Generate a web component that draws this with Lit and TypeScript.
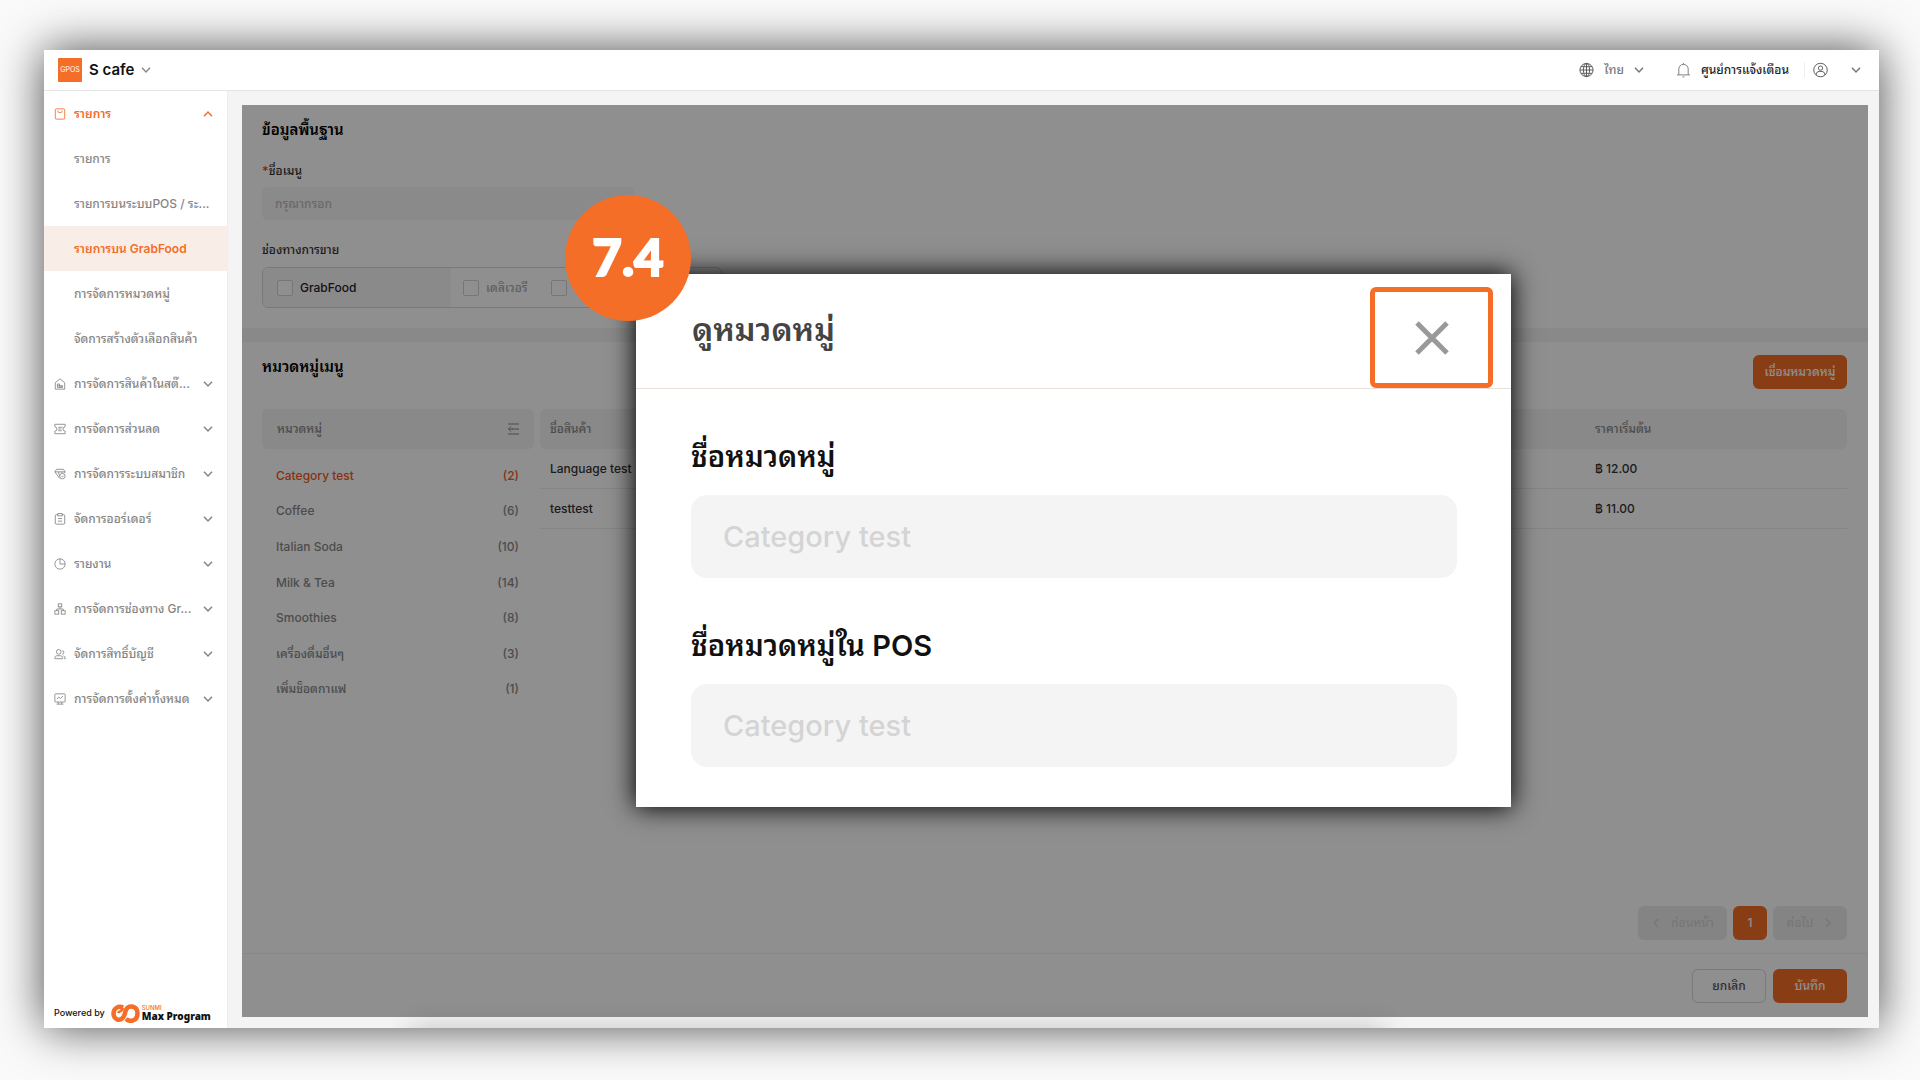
import { LitElement, html, css, svg, TemplateResult } from "lit";
import { customElement } from "lit/decorators.js";
import { classMap } from "lit/directives/class-map.js";

const chevron = (up = false) => html`<svg class="chev" viewBox="0 0 10 10" aria-hidden="true">
  <path d=${up ? "M1 7.2 5 3l4 4.200" : "M1 2.800 5 7l4-4.200"} />
</svg>`;

const icons: Record<string, TemplateResult> = {
  bag: svg`<rect x="1.500" y="1" width="11" height="12" rx="1.500"/><path d="M4.500 3v.5a2.500 2 0 0 0 5 0V3"/>`,
  store: svg`<path d="M1.500 5.500 7 1l5.500 4.500V13h-11z"/><path d="M4 11V7h2.500v4M4 9h6v2H4M8.500 11V9"/>`,
  coupon: svg`<path d="M1 1.500h12v3a2.500 2.500 0 0 0 0 5v3H1v-3a2.500 2.500 0 0 0 0-5z"/><path d="M5 5h5M5 7h3.500M5 9h4"/>`,
  member: svg`<path d="M3 1.500h8l2 3-1 1.500M3 1.500l-2 3L6.500 12M1 4.500h12M5 4.500 6.500 9M9 4.500l.5 1.500"/><circle cx="9.800" cy="9.500" r="3.200"/><path d="m9 9.500.8 1 1.400-1.500"/>`,
  clip: svg`<rect x="1.500" y="2" width="11" height="11" rx="1"/><rect x="4.500" y=".7" width="5" height="2.600" fill="#fff"/><path d="M4.500 6.500h5M4.500 9.500h5"/>`,
  pie: svg`<circle cx="7" cy="7" r="6"/><path d="M7 1v6h6"/>`,
  tree: svg`<rect x="5" y="1" width="4" height="3.500"/><rect x="1" y="9" width="4.500" height="4"/><rect x="8.500" y="9" width="4.500" height="4"/><path d="M7 4.500V7M3.200 9V7h7.600v2"/>`,
  users: svg`<circle cx="5.500" cy="4.500" r="2.700"/><path d="M1 12.500V11a2.500 2.500 0 0 1 2.500-2h4A2.500 2.500 0 0 1 10 11v1.500zM9.500 3.200a2 2 0 0 1 0 4M11 9.200a2.500 2.500 0 0 1 2 2.300v1h-1.200"/>`,
  board: svg`<rect x="1" y="1" width="12" height="9.500" rx="1"/><path d="m3.500 7 2-2.200 2 1.700 3-3M3 13h8M5 10.500V13M9 10.500V13"/>`,
};

interface NavItem { label: string; icon?: string; active?: boolean; open?: boolean; }

const NAV: NavItem[] = [
  { label: "รายการ", icon: "bag", open: true },
  { label: "รายการ" },
  { label: "รายการบนระบบPOS / ระ..." },
  { label: "รายการบน GrabFood", active: true },
  { label: "การจัดการหมวดหมู่" },
  { label: "จัดการสร้างตัวเลือกสินค้า" },
  { label: "การจัดการสินค้าในสต๊...", icon: "store" },
  { label: "การจัดการส่วนลด", icon: "coupon" },
  { label: "การจัดการระบบสมาชิก", icon: "member" },
  { label: "จัดการออร์เดอร์", icon: "clip" },
  { label: "รายงาน", icon: "pie" },
  { label: "การจัดการช่องทาง Gr...", icon: "tree" },
  { label: "จัดการสิทธิ์บัญชี", icon: "users" },
  { label: "การจัดการตั้งค่าทั้งหมด", icon: "board" },
];

const CATEGORIES: [string, number][] = [
  ["Category test", 2],
  ["Coffee", 6],
  ["Italian Soda", 10],
  ["Milk & Tea", 14],
  ["Smoothies", 8],
  ["เครื่องดื่มอื่นๆ", 3],
  ["เพิ่มช็อตกาแฟ", 1],
];

const PRODUCTS = [
  ["Language test", "฿ 12.00"],
  ["testtest", "฿ 11.00"],
];

@customElement("app-root")
export class AppRoot extends LitElement {
  static styles = css`
    :host {
      display: flex;
      box-sizing: border-box;
      min-height: 100vh;
      padding: 50px 41px 52px 44px;
      background: #fafafa;
      color: #333;
      font: 500 12px/16px Inter, "Noto Sans Thai Looped", Loma, Garuda, sans-serif;
    }
    *, *::before, *::after { box-sizing: border-box; }
    button, input { font: inherit; color: inherit; margin: 0; }
    button { padding: 0; border: 0; background: none; white-space: nowrap; }
    h1, h2, h3, ul, p { margin: 0; padding: 0; font: inherit; }
    ul { list-style: none; }
    svg { fill: none; stroke: currentColor; flex: none; }
    .chev { width: 10px; height: 10px; stroke-width: 1.5; }

    .frame {
      position: relative;
      flex: 1;
      display: flex;
      flex-direction: column;
      background: #f4f4f4;
      box-shadow: 0 0 44px rgba(0, 0, 0, 0.7);
    }
    .topbar {
      display: flex;
      align-items: center;
      justify-content: space-between;
      height: 41px;
      padding: 0 18px 0 14px;
      background: #fff;
      border-bottom: 1px solid #e4e4e4;
      color: #8a8a8a;
    }
    .store, .tools, .tool { display: flex; align-items: center; }
    .store { gap: 7px; }
    .logo {
      width: 24px;
      height: 24px;
      border-radius: 1px;
      background: #f46e27;
      color: #fff;
      font-size: 7px;
      font-weight: 400;
      line-height: 24px;
      text-align: center;
    }
    .store-name { color: #111; font-size: 15px; font-weight: 600; line-height: 24px; }
    .tool { gap: 10px; color: #777; }
    .tool + .tool { margin-left: 32px; }
    .tools .notice { color: #222; gap: 10px; }
    .tools .account { margin-left: 15px; padding-left: 8px; gap: 23px; border-left: 1px solid #eee; }
    .i14 { width: 15px; height: 16px; color: #555; }

    .body { flex: 1; display: flex; }
    .sidebar {
      display: flex;
      flex-direction: column;
      width: 184px;
      background: #fff;
      border-right: 1px solid #f3ede9;
    }
    .nav-item {
      display: flex;
      align-items: center;
      width: 100%;
      height: 45px;
      padding: 0 14px 0 10px;
      gap: 8px;
      color: #858585;
      text-align: left;
      text-decoration: none;
    }
    .nav-item.sub { padding: 0 0 0 30px; white-space: nowrap; }
    .nav-item.active { background: #f8ede7; color: #f46e27; font-weight: 600; }
    .nav-item.open { color: #f46e27; font-weight: 600; }
    .nav-item span { flex: 1; }
    .nav-icon { width: 12px; height: 12px; }
    .powered {
      display: flex;
      align-items: center;
      gap: 6px;
      margin-top: auto;
      padding: 0 10px 5px;
      color: #111;
      font-size: 9px;
      line-height: 20px;
      white-space: nowrap;
    }
    .brand { display: flex; align-items: center; gap: 2px; }
    .brand svg { width: 29px; height: 19px; color: #f46e27; }
    .brand-name { display: flex; flex-direction: column; font: 900 10px/11px "Noto Sans", sans-serif; }
    .brand-name small { color: #f46e27; font: 500 6px/6px Inter, sans-serif; }

    .content {
      position: relative;
      flex: 1;
      display: flex;
      flex-direction: column;
      margin: 14px 11px 11px 14px;
    }
    .shade { position: absolute; inset: 0; background: rgba(0, 0, 0, 0.44); }
    .card { background: #fff; padding: 16px 21px 20px 20px; }
    .card + .card { flex: 1; display: flex; flex-direction: column; margin-top: 14px; padding: 13px 21px 13px 20px; }
    .title { color: #000; font-size: 15px; font-weight: 600; line-height: 18px; }
    .label { display: block; margin-top: 24px; color: #333; font-weight: 500; }
    .label b { color: #f04a1a; }
    .text-field {
      display: block;
      width: 373px;
      height: 33px;
      margin-top: 8px;
      padding: 0 13px;
      border: 0;
      border-radius: 6px;
      background: #f6f6f6;
    }
    .text-field + .label { margin-top: 22px; }
    .text-field::placeholder { color: #bbb; opacity: 1; }
    .channels {
      display: flex;
      width: 460px;
      height: 41px;
      margin-top: 9px;
      border: 1px solid #d8d8d8;
      border-radius: 6px;
    }
    .channel-main { width: 188px; padding-left: 14px; background: #f6f6f6; border-radius: 5px 0 0 5px; color: #222; }
    .channel-main, .check { display: flex; align-items: center; gap: 7px; }
    .check { color: #aaa; margin-left: 12px; }
    .check + .check { margin-left: 23px; }
    .channels input {
      appearance: none;
      width: 16px;
      height: 16px;
      border: 1px solid #d4d4d4;
      border-radius: 2px;
      background: #fff;
    }
    .row { display: flex; justify-content: space-between; align-items: center; }
    .row .title { align-self: flex-start; padding-top: 3px; }
    .btn { height: 34px; border-radius: 6px; border: 1px solid transparent; font-weight: 500; }
    .primary { background: #f46e27; color: #fff; }
    .wide { width: 94px; }
    .mid { width: 74px; }
    .square { width: 34px; }
    .ghost { border-color: #d8d8d8; color: #555; }
    .lists { display: flex; gap: 6px; margin-top: 20px; }
    .cats { width: 272px; color: #888; }
    .cats-head {
      display: flex;
      align-items: center;
      justify-content: space-between;
      height: 40px;
      padding: 0 15px;
      border-radius: 6px;
      background: #f4f4f4;
    }
    .cats-head svg { width: 12px; height: 12px; }
    .cats ul { display: flex; flex-direction: column; height: 249px; margin-top: 9px; }
    .cats li { flex: 1; display: flex; }
    .cat { flex: 1; display: flex; align-items: center; justify-content: space-between; padding: 0 15px 0 14px; }
    .cat.on { color: #f4571c; }
    table { flex: 1; border-spacing: 0; table-layout: fixed; color: #333; align-self: flex-start; }
    th, td { height: 40px; padding: 0 10px; text-align: left; font-weight: 500; }
    th { background: #f4f4f4; color: #888; }
    th:first-child { border-radius: 6px 0 0 6px; }
    th:last-child { width: 262px; border-radius: 0 6px 6px 0; }
    td { border-bottom: 1px solid #eee; }
    .pager { display: flex; justify-content: flex-end; gap: 6px; margin-top: auto; }
    .pager .muted { display: flex; align-items: center; justify-content: center; gap: 10px; background: #ececec; color: #d4d4d4; }
    .prev { width: 89px; }
    .footer {
      display: flex;
      justify-content: flex-end;
      gap: 7px;
      padding: 15px 21px 14px;
      border-top: 1px solid #f2f2f2;
      background: #fff;
    }
    .under-shadow { position: absolute; left: 0; right: 0; bottom: 0; height: 40px; overflow: hidden; }
    .under-shadow::after {
      content: "";
      position: absolute;
      top: 40px;
      left: 20%;
      right: 27%;
      height: 40px;
      box-shadow: 0 0 28px rgba(0, 0, 0, 0.2);
    }

    .modal {
      position: absolute;
      left: 592px;
      top: 224px;
      width: 875px;
      background: #fff;
      box-shadow: 0 0 24px 1px #000;
      color: #111;
      font-size: 29px;
      line-height: 40px;
    }
    .modal-head {
      display: flex;
      justify-content: space-between;
      align-items: flex-start;
      height: 115px;
      padding: 13px 18px 0 56px;
      border-bottom: 1px solid #eadfda;
    }
    .modal-head h2 { padding-top: 23px; color: #444; font-size: 32px; font-weight: 600; }
    .close { width: 123px; height: 101px; border: 5px solid #f46e27; border-radius: 6px; color: #999; }
    .close svg { width: 34px; height: 34px; stroke-width: 5; display: block; margin: auto; }
    .modal-body { display: flex; flex-direction: column; gap: 48px; padding: 48px 54px 40px 55px; }
    .field { display: flex; flex-direction: column; gap: 18px; }
    .field label { font-weight: 600; }
    .field input {
      width: 100%;
      height: 83px;
      padding: 0 32px;
      border: 0;
      border-radius: 16px;
      background: #f4f4f4;
      color: #d4d4d4;
    }
    .badge {
      position: absolute;
      left: -71px;
      top: -79px;
      width: 126px;
      height: 126px;
      border-radius: 50%;
      background: #f46e27;
      color: #fff;
      font: 900 51px/124px Lato, sans-serif;
      -webkit-text-stroke: 2px #fff;
      text-align: center;
    }
  `;

  private navItem(item: NavItem) {
    if (!item.icon) {
      return html`<a href="#" class=${classMap({ "nav-item": true, sub: true, active: !!item.active })}>${item.label}</a>`;
    }
    return html`<button class=${classMap({ "nav-item": true, open: !!item.open })} aria-expanded=${item.open ? "true" : "false"}>
      <svg class="nav-icon" viewBox="0 0 14 14" aria-hidden="true">${icons[item.icon]}</svg>
      <span>${item.label}</span>${chevron(item.open)}
    </button>`;
  }

  render() {
    return html`
      <div class="frame">
        <header class="topbar">
          <button class="store">
            <span class="logo">GPOS</span><span class="store-name">S cafe</span>${chevron()}
          </button>
          <div class="tools">
            <button class="tool">
              <svg class="i14" viewBox="0 0 16 16" aria-hidden="true"><circle cx="8" cy="8" r="7" /><ellipse cx="8" cy="8" rx="3.300" ry="7" /><path d="M8 1v14M1 8h14M2 4.500h12M2 11.500h12" /></svg>
              <span>ไทย</span>${chevron()}
            </button>
            <button class="tool notice">
              <svg class="i14" viewBox="0 0 16 16" aria-hidden="true"><path d="M3 13V7a5 5 0 0 1 10 0v6M1 13.200h14M8 .5V2M7 15.300h2" stroke="#777" /></svg>
              <span>ศูนย์การแจ้งเตือน</span>
            </button>
            <button class="tool account" aria-label="บัญชี">
              <svg class="i14" viewBox="0 0 16 16" aria-hidden="true"><circle cx="8" cy="8" r="7.200" /><circle cx="8" cy="6" r="2.300" /><path d="M3.500 13v-.8A3.200 3.200 0 0 1 6.500 9.500h3a3.200 3.200 0 0 1 3 2.700v.8" /></svg>
              ${chevron()}
            </button>
          </div>
        </header>
        <div class="body">
          <nav class="sidebar">
            ${NAV.map((n) => this.navItem(n))}
            <div class="powered">
              <span>Powered by</span>
              <span class="brand">
                <svg viewBox="0 0 29 19" aria-hidden="true" stroke-width="4.500">
                  <path d="M12 3.600C8 1.200 2.500 4 2.500 9.500S8 17.500 11.500 14.200C14.500 11.500 13.500 8 15.500 5c2.500-4 11-3.500 11 4.500s-8 8.800-11.500 5.300" />
                  <path d="M12 4c-.5 3.500-4 2.500-5 5" stroke-width="2.500" />
                </svg>
                <span class="brand-name"><small>SUNMI</small>Max Program</span>
              </span>
            </div>
          </nav>
          <main class="content">
            <section class="card">
              <h2 class="title">ข้อมูลพื้นฐาน</h2>
              <label class="label" for="menu-name"><b>*</b>ชื่อเมนู</label>
              <input class="text-field" id="menu-name" placeholder="กรุณากรอก" />
              <p class="label">ช่องทางการขาย</p>
              <div class="channels">
                <label class="channel-main"><input type="checkbox" />GrabFood</label>
                <label class="check"><input type="checkbox" />เดลิเวอรี</label>
                <label class="check"><input type="checkbox" aria-label="ช่องทางอื่น" /></label>
              </div>
            </section>
            <section class="card">
              <div class="row">
                <h2 class="title">หมวดหมู่เมนู</h2>
                <button class="btn primary wide">เชื่อมหมวดหมู่</button>
              </div>
              <div class="lists">
                <div class="cats">
                  <div class="cats-head">
                    <span>หมวดหมู่</span>
                    <svg viewBox="0 0 12 12" aria-hidden="true"><path d="M1 1h11M5 6h7M1 11h11M4 3.500 1.500 6 4 8.500M1.500 6H6" /></svg>
                  </div>
                  <ul>
                    ${CATEGORIES.map(([name, count], i) => html`<li>
                      <button class=${classMap({ cat: true, on: i === 0 })}><span>${name}</span><span>(${count})</span></button>
                    </li>`)}
                  </ul>
                </div>
                <table>
                  <thead><tr><th>ชื่อสินค้า</th><th>ราคาเริ่มต้น</th></tr></thead>
                  <tbody>${PRODUCTS.map(([name, price]) => html`<tr><td>${name}</td><td>${price}</td></tr>`)}</tbody>
                </table>
              </div>
              <div class="pager">
                <button class="btn muted prev" disabled>
                  <svg class="chev" viewBox="0 0 10 10" aria-hidden="true"><path d="M7 1 3 5l4 4" /></svg>ก่อนหน้า
                </button>
                <button class="btn primary square">1</button>
                <button class="btn muted mid" disabled>
                  ต่อไป<svg class="chev" viewBox="0 0 10 10" aria-hidden="true"><path d="m3 1 4 4-4 4" /></svg>
                </button>
              </div>
            </section>
            <div class="footer">
              <button class="btn ghost mid">ยกเลิก</button>
              <button class="btn primary mid">บันทึก</button>
            </div>
            <div class="shade"></div>
          </main>
        </div>
        <div class="under-shadow"></div>
        <div class="modal" role="dialog" aria-labelledby="modal-title">
          <div class="modal-head">
            <h2 id="modal-title">ดูหมวดหมู่</h2>
            <button class="close" aria-label="ปิด">
              <svg viewBox="0 0 34 34" aria-hidden="true"><path d="M2 2l30 30M32 2 2 32" /></svg>
            </button>
          </div>
          <div class="modal-body">
            <div class="field">
              <label for="cat-name">ชื่อหมวดหมู่</label>
              <input id="cat-name" value="Category test" readonly />
            </div>
            <div class="field">
              <label for="cat-pos">ชื่อหมวดหมู่ใน POS</label>
              <input id="cat-pos" value="Category test" readonly />
            </div>
          </div>
          <div class="badge">7.4</div>
        </div>
      </div>
    `;
  }
}
